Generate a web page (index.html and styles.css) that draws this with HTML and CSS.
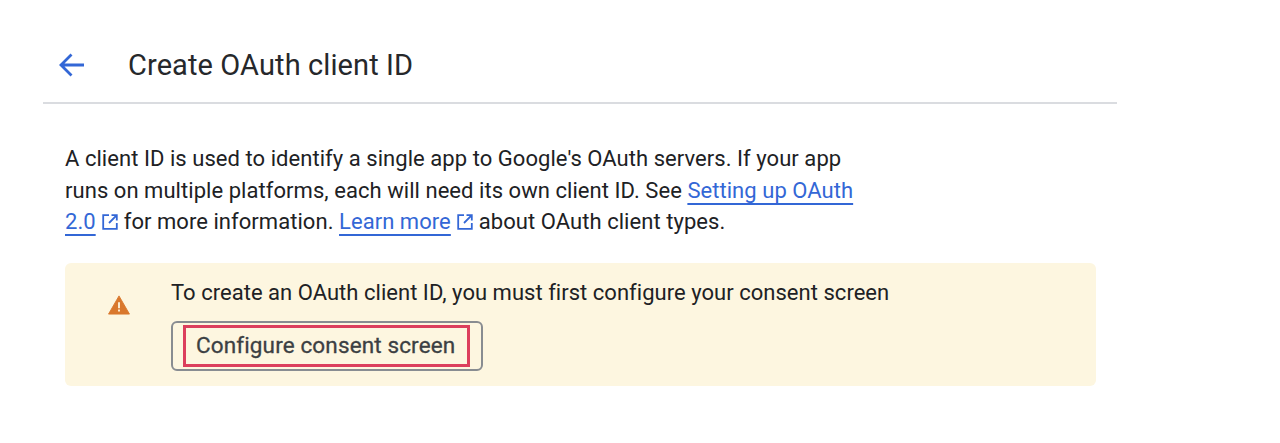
FILE: index.html
```html
<!DOCTYPE html>
<html lang="en">
<head>
<meta charset="utf-8">
<title>Create OAuth client ID</title>
<link rel="stylesheet" href="styles.css">
</head>
<body>
<main class="panel">
  <header class="header">
    <svg class="back" viewBox="0 0 28 24" width="28" height="24"><path d="M26 12H3M13.500 1.500 3 12l10.500 10.500" fill="none" stroke="#3367d6" stroke-width="2.800"/></svg>
    <h1 class="title">Create OAuth client ID</h1>
  </header>
  <section class="content">
    <p class="intro">A client ID is used to identify a single app to Google's OAuth servers. If your app<br>runs on multiple platforms, each will need its own client ID. See <a class="link" href="#">Setting up OAuth<br>2.0</a><svg class="ext" viewBox="0 0 16 16" width="16" height="16"><path d="M7 1.200H1.200v13.600h13.600V9M9.500 1.200h5.300v5.300M14.800 1.200 7 9" fill="none" stroke="#3367d6" stroke-width="1.800"/></svg> for more information. <a class="link" href="#">Learn more</a><svg class="ext" viewBox="0 0 16 16" width="16" height="16"><path d="M7 1.200H1.200v13.600h13.600V9M9.500 1.200h5.300v5.300M14.800 1.200 7 9" fill="none" stroke="#3367d6" stroke-width="1.800"/></svg> about OAuth client types.</p>
    <div class="notice">
      <svg class="warn" viewBox="0 0 24 22" width="22" height="20"><path d="M12 1 23.500 21H.5Z" fill="#d9782d" stroke="#d9782d" stroke-linejoin="round"/><path d="M11 8h2v6.500h-2zM11 16h2v2.200h-2z" fill="#fdf6e0"/></svg>
      <div class="notice-body">
        <p class="notice-text">To create an OAuth client ID, you must first configure your consent screen</p>
        <div class="button"><span class="highlight">Configure consent screen</span></div>
      </div>
    </div>
  </section>
</main>
</body>
</html>
```
FILE: styles.css
```css
* { box-sizing: border-box; }
html, body { margin: 0; background: #fff; }
body { width: 1280px; height: 443px; overflow: hidden; font-family: Roboto, "Liberation Sans", sans-serif; color: #202124; }
.panel { width: 1074px; margin-left: 43px; }
.header { height: 104px; display: flex; align-items: center; padding: 38px 0 10px 15px; gap: 42px; border-bottom: 2px solid #dadce0; }
.back { flex: none; }
.title { margin: 0; font-size: 29px; font-weight: 400; line-height: 36px; letter-spacing: 0.1px; color: #26282b; }
.content { padding: 39px 0 0 22px; }
.intro { margin: 0; width: 810px; font-size: 22px; line-height: 31.500px; letter-spacing: 0.05px; }
.link { color: #3367d6; text-decoration: underline; text-underline-offset: 5px; text-decoration-thickness: 1.5px; }
.ext { margin: 0 0.5px 0 6px; vertical-align: -1px; }
.notice { margin-top: 25.500px; width: 1031px; height: 123px; background: #fdf6e0; border-radius: 6px; display: flex; }
.warn { flex: none; margin: 32px 0 0 43px; }
.notice-body { margin-left: 41px; padding-top: 14px; }
.notice-text { margin: 0; font-size: 22px; line-height: 31px; letter-spacing: 0.03px; }
.button { margin-top: 13px; width: 312px; height: 50px; border: 2px solid #888c91; border-radius: 6px; padding: 2px 10px; }
.highlight { display: block; width: 287px; height: 42px; border: 3px solid #dc3f5d; font-size: 22.500px; font-weight: 400; letter-spacing: 0.13px; line-height: 34px; color: #3c4043; padding-left: 10px; white-space: nowrap; -webkit-text-stroke: 0.3px #3c4043; }
```
